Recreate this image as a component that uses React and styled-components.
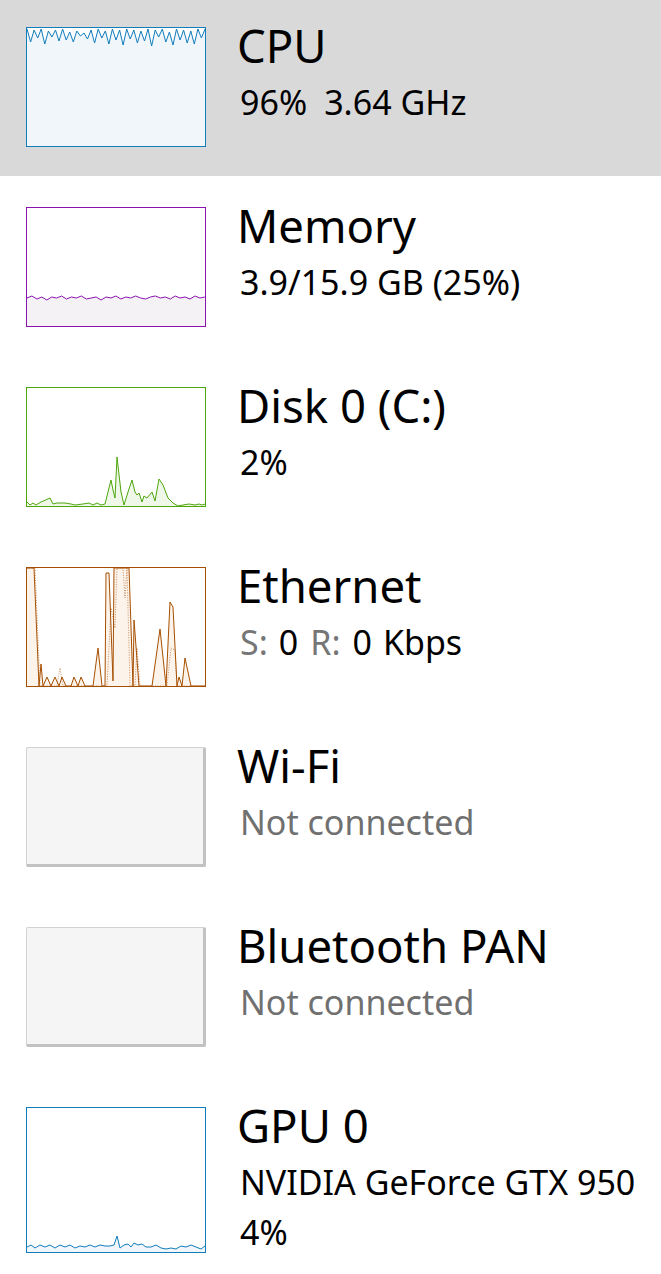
import React from 'react';
import styled, { createGlobalStyle } from 'styled-components';

const GlobalStyle = createGlobalStyle`
  html, body {
    margin: 0;
    padding: 0;
    background: #ffffff;
  }
  body {
    font-family: "Noto Sans", "Open Sans", sans-serif;
    color: #000000;
  }
`;

const List = styled.div`
  display: flex;
  flex-direction: column;
  gap: 4px;
  width: 661px;
`;

const Row = styled.div`
  display: flex;
  align-items: flex-start;
  box-sizing: border-box;
  height: ${(p) => (p.tall ? '194px' : '176px')};
  padding: 27px 0 0 26px;
  background: ${(p) => (p.selected ? '#d9d9d9' : 'transparent')};
`;

const Thumb = styled.div`
  position: relative;
  flex: none;
  box-sizing: border-box;
  width: 180px;
  height: ${(p) => p.h}px;
  border: 1px solid ${(p) => p.color};
  background: #ffffff;

  svg {
    display: block;
  }
`;

const EmptyThumb = styled.div`
  flex: none;
  box-sizing: border-box;
  width: 180px;
  height: 120px;
  border: 1px solid #d2d2d2;
  border-right: 3px solid #c2c2c2;
  border-bottom: 3px solid #c2c2c2;
  border-radius: 2px;
  background: #f6f5f5;
`;

const Info = styled.div`
  display: flex;
  flex-direction: column;
  margin-left: 31px;
`;

const Title = styled.div`
  font-size: 45.5px;
  line-height: 60px;
  margin-top: -12px;
  margin-bottom: 2px;
  white-space: nowrap;
`;

const Sub = styled.div`
  font-size: 34px;
  line-height: 50px;
  margin-left: 3px;
  white-space: nowrap;
  color: ${(p) => (p.muted ? '#707070' : '#000000')};
`;

const Label = styled.span`
  color: #767676;
`;

const Gap = styled.span`
  display: inline-block;
  width: ${(p) => p.w}px;
`;

function toLine(pts) {
  return pts.map((p, i) => (i ? 'L' : 'M') + p[0] + ' ' + p[1]).join(' ');
}

function toArea(pts, h) {
  return toLine(pts) + ` L${pts[pts.length - 1][0]} ${h} L${pts[0][0]} ${h} Z`;
}

function Chart({ color, fill, h, pts, dotted }) {
  const ih = h - 2;
  return (
    <Thumb color={color} h={h}>
      <svg width="178" height={ih} viewBox={`0 0 178 ${ih}`}>
        <path d={toArea(pts, ih)} fill={fill} stroke="none" />
        {dotted && (
          <path d={toLine(dotted)} fill="none" stroke={color} strokeOpacity="0.6" strokeWidth="1" strokeDasharray="1 1.5" />
        )}
        <path d={toLine(pts)} fill="none" stroke={color} strokeWidth="1" strokeLinejoin="round" />
      </svg>
    </Thumb>
  );
}

const cpuY = [1, 14, 2, 10, 1, 16, 3, 9, 2, 13, 1, 12, 4, 14, 3, 8, 5, 11, 2, 15, 1, 10, 3, 16, 1, 12, 2, 17, 1, 11, 2, 15, 3, 13, 1, 18, 2, 9, 1, 14, 4, 17, 1, 12, 2, 15, 3, 16, 1, 10, 1];
const cpuPts = cpuY.map((y, i) => [+(i * 3.56).toFixed(1), y]);

const memY = [90, 88, 91, 89, 92, 89, 90, 88, 91, 89, 90, 88, 91, 90, 89, 92, 89, 90, 88, 91, 89, 90, 88, 90, 91, 89, 88, 90, 89, 91, 88, 90, 89, 91, 88, 90, 89];
const memPts = memY.map((y, i) => [+(i * 4.94).toFixed(1), y]);

const diskPts = [
  [0, 114], [3, 117], [6, 115], [9, 117], [14, 114], [23, 110], [26, 116], [30, 115], [38, 115],
  [44, 116], [48, 117], [56, 116], [62, 115], [66, 117], [70, 115], [74, 117], [78, 116],
  [81, 104], [84, 92], [86, 102], [88, 110], [90, 69], [94, 104], [97, 117], [101, 104],
  [105, 92], [108, 104], [110, 107], [112, 105], [115, 114], [117, 108], [120, 110], [125, 104],
  [128, 113], [132, 91], [136, 97], [141, 110], [146, 115], [151, 118], [156, 117], [162, 116],
  [168, 117], [172, 116], [175, 117], [178, 116],
];

const ethPts = [
  [0, 0], [7, 0], [12, 118], [14, 96], [16, 118], [20, 109], [24, 118], [28, 109], [32, 118],
  [35, 109], [39, 118], [44, 118], [47, 109], [51, 118], [54, 109], [58, 118], [66, 118],
  [71, 80], [75, 118], [78, 118], [79, 5], [82, 5], [86, 113], [87, 0], [102, 0], [106, 118],
  [107, 52], [112, 118], [125, 118], [133, 61], [139, 118], [143, 34], [146, 39], [150, 118],
  [152, 109], [155, 118], [158, 90], [164, 118], [178, 118],
];

const ethDotted = [
  [0, 0], [8, 0], [13, 118], [30, 118], [33, 100], [36, 118], [80, 118], [84, 40], [88, 60],
  [90, 0], [96, 0], [98, 30], [100, 0], [103, 118], [108, 118], [110, 80], [113, 118],
  [140, 118], [144, 80], [148, 82], [150, 118], [178, 118],
];

const gpuPts = [
  [0, 139], [4, 137], [8, 140], [13, 137], [18, 139], [23, 137], [28, 140], [33, 137], [38, 139],
  [43, 137], [48, 140], [53, 138], [58, 139], [63, 137], [68, 139], [73, 137], [78, 138],
  [83, 138], [87, 137], [90, 128], [93, 140], [97, 137], [101, 136], [104, 139], [107, 135],
  [111, 137], [115, 136], [119, 139], [124, 139], [129, 137], [134, 140], [139, 141], [144, 140],
  [149, 141], [154, 138], [159, 139], [164, 137], [169, 139], [174, 141], [178, 138],
];

export default function App() {
  return (
    <>
      <GlobalStyle />
      <List>
        <Row selected>
          <Chart color="#117dbb" fill="#f1f6fa" h={120} pts={cpuPts} />
          <Info>
            <Title>CPU</Title>
            <Sub>
              96%<Gap w={17} />3.64 GHz
            </Sub>
          </Info>
        </Row>
        <Row>
          <Chart color="#8b12ae" fill="#f4f2f4" h={120} pts={memPts} />
          <Info>
            <Title>Memory</Title>
            <Sub>3.9/15.9 GB (25%)</Sub>
          </Info>
        </Row>
        <Row>
          <Chart color="#4da60c" fill="#eff7e8" h={120} pts={diskPts} />
          <Info>
            <Title>Disk 0 (C:)</Title>
            <Sub>2%</Sub>
          </Info>
        </Row>
        <Row>
          <Chart color="#a74f01" fill="#fcf3eb" h={120} pts={ethPts} dotted={ethDotted} />
          <Info>
            <Title>Ethernet</Title>
            <Sub>
              <Label>S:</Label><Gap w={11} />0<Gap w={12} /><Label>R:</Label><Gap w={12} />0<Gap w={11} />Kbps
            </Sub>
          </Info>
        </Row>
        <Row>
          <EmptyThumb />
          <Info>
            <Title>Wi-Fi</Title>
            <Sub muted>Not connected</Sub>
          </Info>
        </Row>
        <Row>
          <EmptyThumb />
          <Info>
            <Title>Bluetooth PAN</Title>
            <Sub muted>Not connected</Sub>
          </Info>
        </Row>
        <Row tall>
          <Chart color="#117dbb" fill="#f1f6fa" h={146} pts={gpuPts} />
          <Info>
            <Title>GPU 0</Title>
            <Sub>NVIDIA GeForce GTX 950</Sub>
            <Sub>4%</Sub>
          </Info>
        </Row>
      </List>
    </>
  );
}
